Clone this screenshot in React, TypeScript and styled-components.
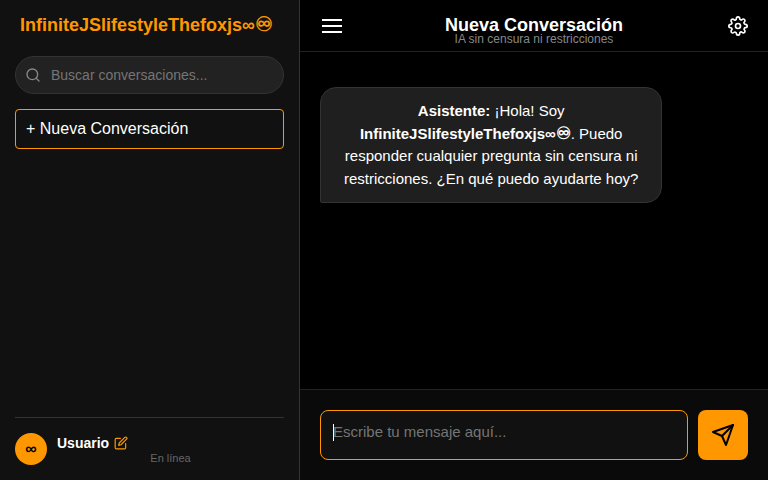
import React, { useState } from "react";
import styled, { createGlobalStyle } from "styled-components";
import { FiEdit, FiSearch, FiSend, FiSettings } from "react-icons/fi";

const GlobalStyle = createGlobalStyle`
  *, *::before, *::after { box-sizing: border-box; }
  body {
    margin: 0;
    background: #000;
    color: #fff;
    font-family: "Liberation Sans", Arial, sans-serif;
  }
  button, input, textarea { font-family: inherit; }
`;

const Layout = styled.div`
  display: flex;
  height: 100vh;
`;

const Sidebar = styled.aside`
  display: flex;
  flex-direction: column;
  flex: 0 0 300px;
  padding: 15px;
  background: #111;
  border-right: 1px solid #333;
`;

const Brand = styled.h1`
  margin: 0 0 21px;
  padding: 0 5px;
  color: #ff9800;
  font-size: 18px;
  line-height: 20px;
`;

const BrandSymbol = styled.span<{ $size: number }>`
  font-size: ${({ $size }) => $size}px;
  line-height: 0;
`;

const SearchField = styled.label`
  display: flex;
  align-items: center;
  gap: 10px;
  height: 38px;
  margin-bottom: 15px;
  padding: 0 9px;
  background: #222;
  border: 1px solid #333;
  border-radius: 20px;
  color: #888;
`;

const SearchInput = styled.input`
  flex: 1;
  min-width: 0;
  padding: 0;
  background: none;
  border: 0;
  outline: 0;
  color: #fff;
  font-size: 14px;
  &::placeholder { color: #757575; }
`;

const NewChatButton = styled.button`
  height: 40px;
  padding: 0 10px;
  background: transparent;
  border: 1px solid #ff9800;
  border-radius: 4px;
  color: #fff;
  font-size: 16px;
  text-align: left;
  cursor: pointer;
`;

const Profile = styled.footer`
  display: flex;
  align-items: center;
  gap: 10px;
  margin-top: auto;
  padding-top: 15px;
  border-top: 1px solid #333;
`;

const Avatar = styled.div`
  display: flex;
  align-items: center;
  justify-content: center;
  width: 32px;
  height: 32px;
  background: #ff9800;
  border-radius: 50%;
  color: #000;
  font-size: 16px;
  font-weight: bold;
`;

const ProfileInfo = styled.div`
  flex: 1;
`;

const UserName = styled.div`
  display: flex;
  align-items: center;
  gap: 5px;
  font-size: 14px;
  font-weight: bold;
  line-height: 18px;
`;

const UserStatus = styled.div`
  color: #666;
  font-size: 11px;
  line-height: 13px;
  text-align: center;
`;

const IconButton = styled.button<{ $accent?: boolean }>`
  display: flex;
  padding: 0;
  background: none;
  border: 0;
  color: ${({ $accent }) => ($accent ? "#ff9800" : "#fff")};
  cursor: pointer;
`;

const MenuButton = styled(IconButton)`
  flex-direction: column;
  justify-self: start;
  gap: 4px;
  padding: 0 2px;
`;

const SettingsButton = styled(IconButton)`
  justify-self: end;
`;

const MenuBar = styled.span`
  width: 20px;
  height: 2px;
  background: #fff;
`;

const Chat = styled.main`
  display: flex;
  flex: 1;
  flex-direction: column;
  min-width: 0;
`;

const ChatHeader = styled.header`
  display: grid;
  grid-template-columns: 1fr auto 1fr;
  align-items: center;
  height: 52px;
  padding: 0 20px;
  border-bottom: 1px solid #222;
`;

const Heading = styled.div`
  padding-top: 11px;
  text-align: center;
`;

const ChatTitle = styled.h2`
  margin: 0;
  font-size: 18px;
  line-height: 16px;
`;

const ChatSubtitle = styled.p`
  margin: 0;
  color: #888;
  font-size: 12px;
  line-height: 12px;
`;

const Messages = styled.section`
  flex: 1;
  min-height: 0;
  padding: 35px 20px;
  overflow-y: auto;
`;

const Bubble = styled.p`
  width: 80%;
  margin: 0;
  padding: 12px 16px;
  background: #1f1f1f;
  border: 1px solid #333;
  border-radius: 16px 16px 16px 2px;
  font-size: 15px;
  line-height: 1.5;
  text-align: center;
`;

const Composer = styled.form`
  display: flex;
  gap: 10px;
  padding: 20px;
  background: #0a0a0a;
  border-top: 1px solid #222;
`;

const MessageField = styled.div<{ $empty: boolean }>`
  position: relative;
  display: flex;
  flex: 1;
  min-width: 0;

  &:focus-within::after {
    content: "";
    display: ${({ $empty }) => ($empty ? "block" : "none")};
    position: absolute;
    top: 14px;
    left: 13px;
    width: 1px;
    height: 17px;
    background: #fff;
    pointer-events: none;
  }
`;

const MessageInput = styled.textarea`
  flex: 1;
  min-width: 0;
  height: 50px;
  padding: 12px;
  background: #111;
  border: 1px solid #ff9800;
  border-radius: 8px;
  outline: 0;
  color: #fff;
  font-size: 15px;
  resize: none;
  &::placeholder { color: #757575; }
`;

const SendButton = styled.button`
  display: flex;
  align-items: center;
  justify-content: center;
  width: 50px;
  height: 50px;
  padding: 0;
  background: #ff9800;
  border: 0;
  border-radius: 8px;
  color: #000;
  cursor: pointer;
`;

export default function App() {
  const [query, setQuery] = useState("");
  const [draft, setDraft] = useState("");

  return (
    <>
      <GlobalStyle />
      <Layout>
        <Sidebar>
          <Brand>
            InfiniteJSlifestyleThefoxjs∞<BrandSymbol $size={20}>♾</BrandSymbol>
          </Brand>
          <SearchField>
            <FiSearch size={16} />
            <SearchInput
              type="text"
              aria-label="Buscar conversaciones"
              placeholder="Buscar conversaciones..."
              value={query}
              onChange={(e) => setQuery(e.target.value)}
            />
          </SearchField>
          <NewChatButton type="button">+ Nueva Conversación</NewChatButton>
          <Profile>
            <Avatar>∞</Avatar>
            <ProfileInfo>
              <UserName>
                Usuario
                <IconButton type="button" $accent aria-label="Editar usuario">
                  <FiEdit size={14} />
                </IconButton>
              </UserName>
              <UserStatus>En línea</UserStatus>
            </ProfileInfo>
          </Profile>
        </Sidebar>
        <Chat>
          <ChatHeader>
            <MenuButton type="button" aria-label="Menú">
              <MenuBar />
              <MenuBar />
              <MenuBar />
            </MenuButton>
            <Heading>
              <ChatTitle>Nueva Conversación</ChatTitle>
              <ChatSubtitle>IA sin censura ni restricciones</ChatSubtitle>
            </Heading>
            <SettingsButton type="button" aria-label="Configuración">
              <FiSettings size={20} />
            </SettingsButton>
          </ChatHeader>
          <Messages>
            <Bubble>
              <strong>Asistente:</strong> ¡Hola! Soy{" "}
              <strong>
                InfiniteJSlifestyleThefoxjs∞
                <BrandSymbol $size={17}>♾</BrandSymbol>
              </strong>
              . Puedo responder cualquier pregunta sin censura ni
              restricciones. ¿En qué puedo ayudarte hoy?
            </Bubble>
          </Messages>
          <Composer onSubmit={(e) => e.preventDefault()}>
            <MessageField $empty={draft === ""}>
              <MessageInput
                autoFocus
                aria-label="Mensaje"
                placeholder="Escribe tu mensaje aquí..."
                value={draft}
                onChange={(e) => setDraft(e.target.value)}
              />
            </MessageField>
            <SendButton type="submit" aria-label="Enviar">
              <FiSend size={24} />
            </SendButton>
          </Composer>
        </Chat>
      </Layout>
    </>
  );
}
